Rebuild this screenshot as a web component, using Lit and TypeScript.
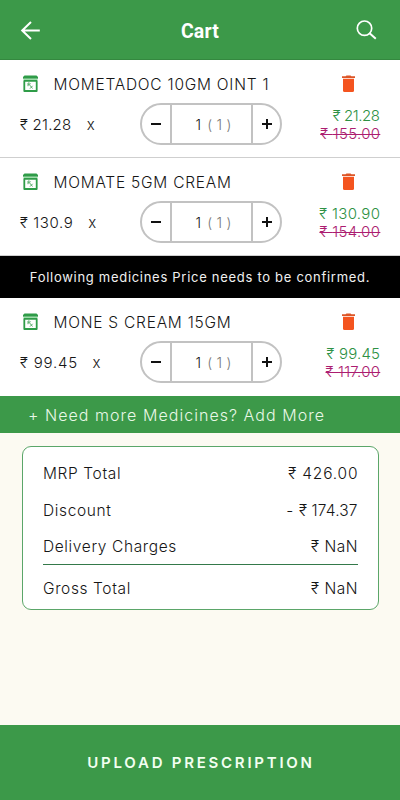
import { LitElement, html, css } from "lit";
import { customElement, property } from "lit/decorators.js";
import { styleMap } from "lit/directives/style-map.js";

/** A text together with its tracking in pixels. */
interface Tracked {
  text: string;
  track: number;
}

interface CartItem {
  name: string;
  unit: Tracked;
  price: Tracked;
  mrp: Tracked;
}

const confirmed: CartItem[] = [
  {
    name: "MOMETADOC 10GM OINT 1",
    unit: { text: "21.28", track: 0.25 },
    price: { text: "21.28", track: -0.4 },
    mrp: { text: "155.00", track: 0.3 },
  },
  {
    name: "MOMATE 5GM CREAM",
    unit: { text: "130.9", track: 0.6 },
    price: { text: "130.90", track: 0.35 },
    mrp: { text: "154.00", track: 0.35 },
  },
];

const unconfirmed: CartItem[] = [
  {
    name: "MONE S CREAM 15GM",
    unit: { text: "99.45", track: 0.8 },
    price: { text: "99.45", track: 0.2 },
    mrp: { text: "117.00", track: 0.25 },
  },
];

const rupees = (cls: string, t: Tracked) =>
  html`<span class=${cls} style=${styleMap({ letterSpacing: `${t.track}px`, marginRight: `${-t.track}px` })}>₹ ${t.text}</span>`;

@customElement("cart-item")
export class CartItemRow extends LitElement {
  @property({ attribute: false }) item!: CartItem;

  static styles = css`
    :host {
      display: block;
      height: 98px;
      box-sizing: border-box;
      background: #fff;
      color: #161616;
    }
    .top {
      display: flex;
      align-items: center;
      height: 28px;
      padding: 10px 43px 0 22px;
    }
    .jar { width: 17px; height: 18px; display: block; }
    .name {
      flex: 1;
      margin-left: 14.5px;
      font-size: 15.5px;
      letter-spacing: 0.76px;
      white-space: nowrap;
    }
    .bin { width: 17px; height: 18px; display: block; }
    .bottom {
      display: grid;
      grid-template-columns: 120px 142px 1fr;
      align-items: center;
      height: 42px;
      margin-top: 5px;
      padding: 0 20px;
    }
    .unit { font-size: 15px; white-space: pre; }
    .times { margin-left: 15.5px; }
    .stepper {
      display: grid;
      grid-template-columns: 28px 1fr 27px;
      height: 42px;
      box-sizing: border-box;
      border: 2px solid #c2c2c2;
      border-radius: 21px;
    }
    .step { display: flex; align-items: center; justify-content: center; }
    .count {
      display: flex;
      align-items: center;
      justify-content: center;
      gap: 6px;
      border: solid #c2c2c2;
      border-width: 0 2px;
      font-size: 14px;
      padding-left: 4px;
    }
    .pack { color: #777; letter-spacing: 4.5px; margin-right: -4.5px; }
    .prices {
      display: flex;
      flex-direction: column;
      align-items: flex-end;
      font-size: 15px;
      line-height: 18px;
      padding-top: 2px;
    }
    .now { color: #2d9144; }
    .was { color: #ac1c70; text-decoration: line-through; text-decoration-thickness: 1px; }
  `;

  render() {
    const i = this.item;
    return html`
      <div class="top">
        <svg class="jar" viewBox="0 0 17 18">
          <path d="M2.5 .6H14.5L16 2V3.8H1V2Z" fill="#2f9c48" />
          <rect x="1.5" y="3.8" width="14" height="1.4" fill="#9ddca9" />
          <path d="M2.3 5.9H14.7V16H2.3Z" fill="#fff" stroke="#2f9c48" stroke-width="1.8" stroke-linejoin="round" />
          <path d="M6 11.2V8H7.6Q9 8.8 7.6 9.7H6M7.5 9.8L10.5 13.5M10.6 10.8L8 13.6" fill="none" stroke="#4ba55f" stroke-width=".9" />
        </svg>
        <span class="name">${i.name}</span>
        <svg class="bin" viewBox="0 0 17 18">
          <path d="M2 1.3H5.6L6.5.5H10.5L11.4 1.3H15V3H2Z" fill="#dd5627" />
          <path d="M3 3.8H14V15.5Q14 17 12.5 17H4.5Q3 17 3 15.5Z" fill="#f4541f" />
        </svg>
      </div>
      <div class="bottom">
        <div class="unit">${rupees("", i.unit)}<span class="times">x</span></div>
        <div class="stepper">
          <div class="step">
            <svg width="12" height="12" viewBox="0 0 12 12"><path d="M1 6H11" stroke="#111" stroke-width="2" /></svg>
          </div>
          <div class="count"><span>1</span><span class="pack">(1)</span></div>
          <div class="step">
            <svg width="12" height="12" viewBox="0 0 12 12"><path d="M1 6H11M6 1V11" stroke="#111" stroke-width="2" /></svg>
          </div>
        </div>
        <div class="prices">${rupees("now", i.price)}${rupees("was", i.mrp)}</div>
      </div>
    `;
  }
}

@customElement("app-root")
export class AppRoot extends LitElement {
  static styles = css`
    :host {
      display: flex;
      flex-direction: column;
      height: 800px;
      width: 400px;
      background: #fcfaf2;
      font-family: Inter, "Open Sans", sans-serif;
      font-weight: 300;
      color: #161616;
      overflow: hidden;
    }
    .header {
      display: grid;
      grid-template-columns: 22px 1fr 22px;
      align-items: center;
      height: 60px;
      box-sizing: border-box;
      padding: 0 23px 0 20px;
      background: #3c9949;
      border-bottom: 1px solid #34883f;
      flex: none;
    }
    .title {
      text-align: center;
      font: 700 19.5px Roboto, sans-serif;
      letter-spacing: 0.2px;
      color: #fff;
      padding: 3px 0 0 3px;
    }
    .divided { border-bottom: 1px solid #cfcfcf; }
    .notice {
      display: flex;
      align-items: center;
      justify-content: center;
      height: 42px;
      background: #000;
      color: #f0f0f0;
      font-size: 13px;
      font-weight: 400;
      letter-spacing: 0.71px;
      white-space: nowrap;
      flex: none;
    }
    .add {
      display: flex;
      align-items: center;
      height: 37px;
      padding-left: 28px;
      background: #3c9949;
      color: #e9f8e7;
      font-size: 16px;
      letter-spacing: 1.04px;
      white-space: nowrap;
      flex: none;
    }
    .card {
      margin: 12.5px 21.5px 0;
      height: 164px;
      box-sizing: border-box;
      border: 1px solid #5ba669;
      border-radius: 9px;
      background: #fff;
      padding: 9px 20px 0 20.5px;
      font-size: 15.5px;
    }
    .line {
      display: flex;
      align-items: center;
      justify-content: space-between;
      height: 36.5px;
      letter-spacing: 0.62px;
      white-space: nowrap;
    }
    .total { border-top: 1.5px solid #34794a; height: 47px; margin-top: -1px; }
    .upload {
      display: flex;
      align-items: center;
      justify-content: center;
      height: 75px;
      margin-top: auto;
      padding-left: 2px;
      box-sizing: border-box;
      background: #3c9949;
      color: #f3fff1;
      font-size: 15px;
      font-weight: 600;
      letter-spacing: 2.75px;
      white-space: nowrap;
      flex: none;
    }
  `;

  render() {
    return html`
      <div class="header">
        <svg width="22" height="22" viewBox="0 0 22 22">
          <path d="M19.8 11.5H2.5M11 3L2.2 11.5L11 20" fill="none" stroke="#fff" stroke-width="2" />
        </svg>
        <div class="title">Cart</div>
        <svg width="22" height="22" viewBox="0 0 22 22">
          <circle cx="9.5" cy="9.2" r="7.2" fill="none" stroke="#fff" stroke-width="1.7" />
          <path d="M14.6 14.3L20.8 19.8" stroke="#fff" stroke-width="2" />
        </svg>
      </div>
      ${confirmed.map((i) => html`<cart-item class="divided" .item=${i}></cart-item>`)}
      <div class="notice">Following medicines Price needs to be confirmed.</div>
      ${unconfirmed.map((i) => html`<cart-item .item=${i}></cart-item>`)}
      <div class="add">+ Need more Medicines? Add More</div>
      <div class="card">
        <div class="line"><span>MRP Total</span>${rupees("", { text: "426.00", track: 0.8 })}</div>
        <div class="line">
          <span>Discount</span>
          <span>- ${rupees("", { text: "174.37", track: 0.15 })}</span>
        </div>
        <div class="line"><span>Delivery Charges</span>${rupees("", { text: "NaN", track: 0.5 })}</div>
        <div class="line total"><span>Gross Total</span>${rupees("", { text: "NaN", track: 0.5 })}</div>
      </div>
      <div class="upload">UPLOAD PRESCRIPTION</div>
    `;
  }
}
